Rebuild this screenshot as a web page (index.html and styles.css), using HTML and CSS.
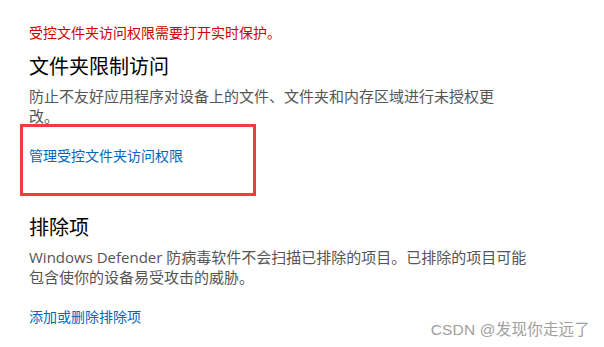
FILE: index.html
```html
<!DOCTYPE html>
<html lang="zh-CN">
<head>
<meta charset="utf-8">
<title>文件夹限制访问</title>
<link rel="stylesheet" href="styles.css">
</head>
<body>
<main class="page">
  <p class="warning">受控文件夹访问权限需要打开实时保护。</p>
  <section class="group">
    <h2 class="title">文件夹限制访问</h2>
    <p class="desc desc-1">防止不友好应用程序对设备上的文件、文件夹和内存区域进行未授权更改。</p>
    <div class="link-wrap">
      <a class="link" href="#">管理受控文件夹访问权限</a>
      <span class="highlight"></span>
    </div>
  </section>
  <section class="group group-2">
    <h2 class="title">排除项</h2>
    <p class="desc desc-2">Windows Defender 防病毒软件不会扫描已排除的项目。已排除的项目可能包含使你的设备易受攻击的威胁。</p>
    <div class="link-wrap">
      <a class="link" href="#">添加或删除排除项</a>
    </div>
  </section>
</main>
<div class="watermark">CSDN @发现你走远了</div>
</body>
</html>
```
FILE: styles.css
```css
html, body {
  margin: 0;
  padding: 0;
  background: #ffffff;
}
body {
  width: 604px;
  height: 347px;
  overflow: hidden;
  position: relative;
  font-family: "Open Sans", "Noto Sans CJK SC", sans-serif;
}
.page {
  padding: 22px 0 0 29px;
  width: 520px;
}
.warning {
  margin: 0;
  font-size: 14px;
  line-height: 20px;
  color: #d00000;
  font-family: "Noto Sans CJK SC", sans-serif;
}
.title {
  margin: 10px 0 0;
  font-size: 20px;
  line-height: 28px;
  font-weight: 400;
  color: #000000;
  font-family: "Noto Sans CJK SC", sans-serif;
}
.desc {
  margin: 6px 0 0;
  font-size: 15px;
  line-height: 20px;
  color: #555555;
}
.desc-1 {
  width: 480px;
}
.desc-2 {
  width: 505px;
}
.link-wrap {
  position: relative;
  margin-top: 19px;
  line-height: 20px;
}
.link {
  font-size: 14px;
  color: #0067c0;
  text-decoration: none;
  font-family: "Noto Sans CJK SC", sans-serif;
}
.highlight {
  position: absolute;
  left: -9px;
  top: -21px;
  width: 230px;
  height: 66px;
  border: 3px solid #f23c3c;
}
.group-2 {
  margin-top: 48px;
}
.watermark {
  position: absolute;
  right: 14px;
  bottom: 7px;
  font-family: "Liberation Sans", "Noto Sans CJK SC", sans-serif;
  font-size: 15.5px;
  line-height: 20px;
  letter-spacing: 0.2px;
  color: #a0a0a0;
}
```
